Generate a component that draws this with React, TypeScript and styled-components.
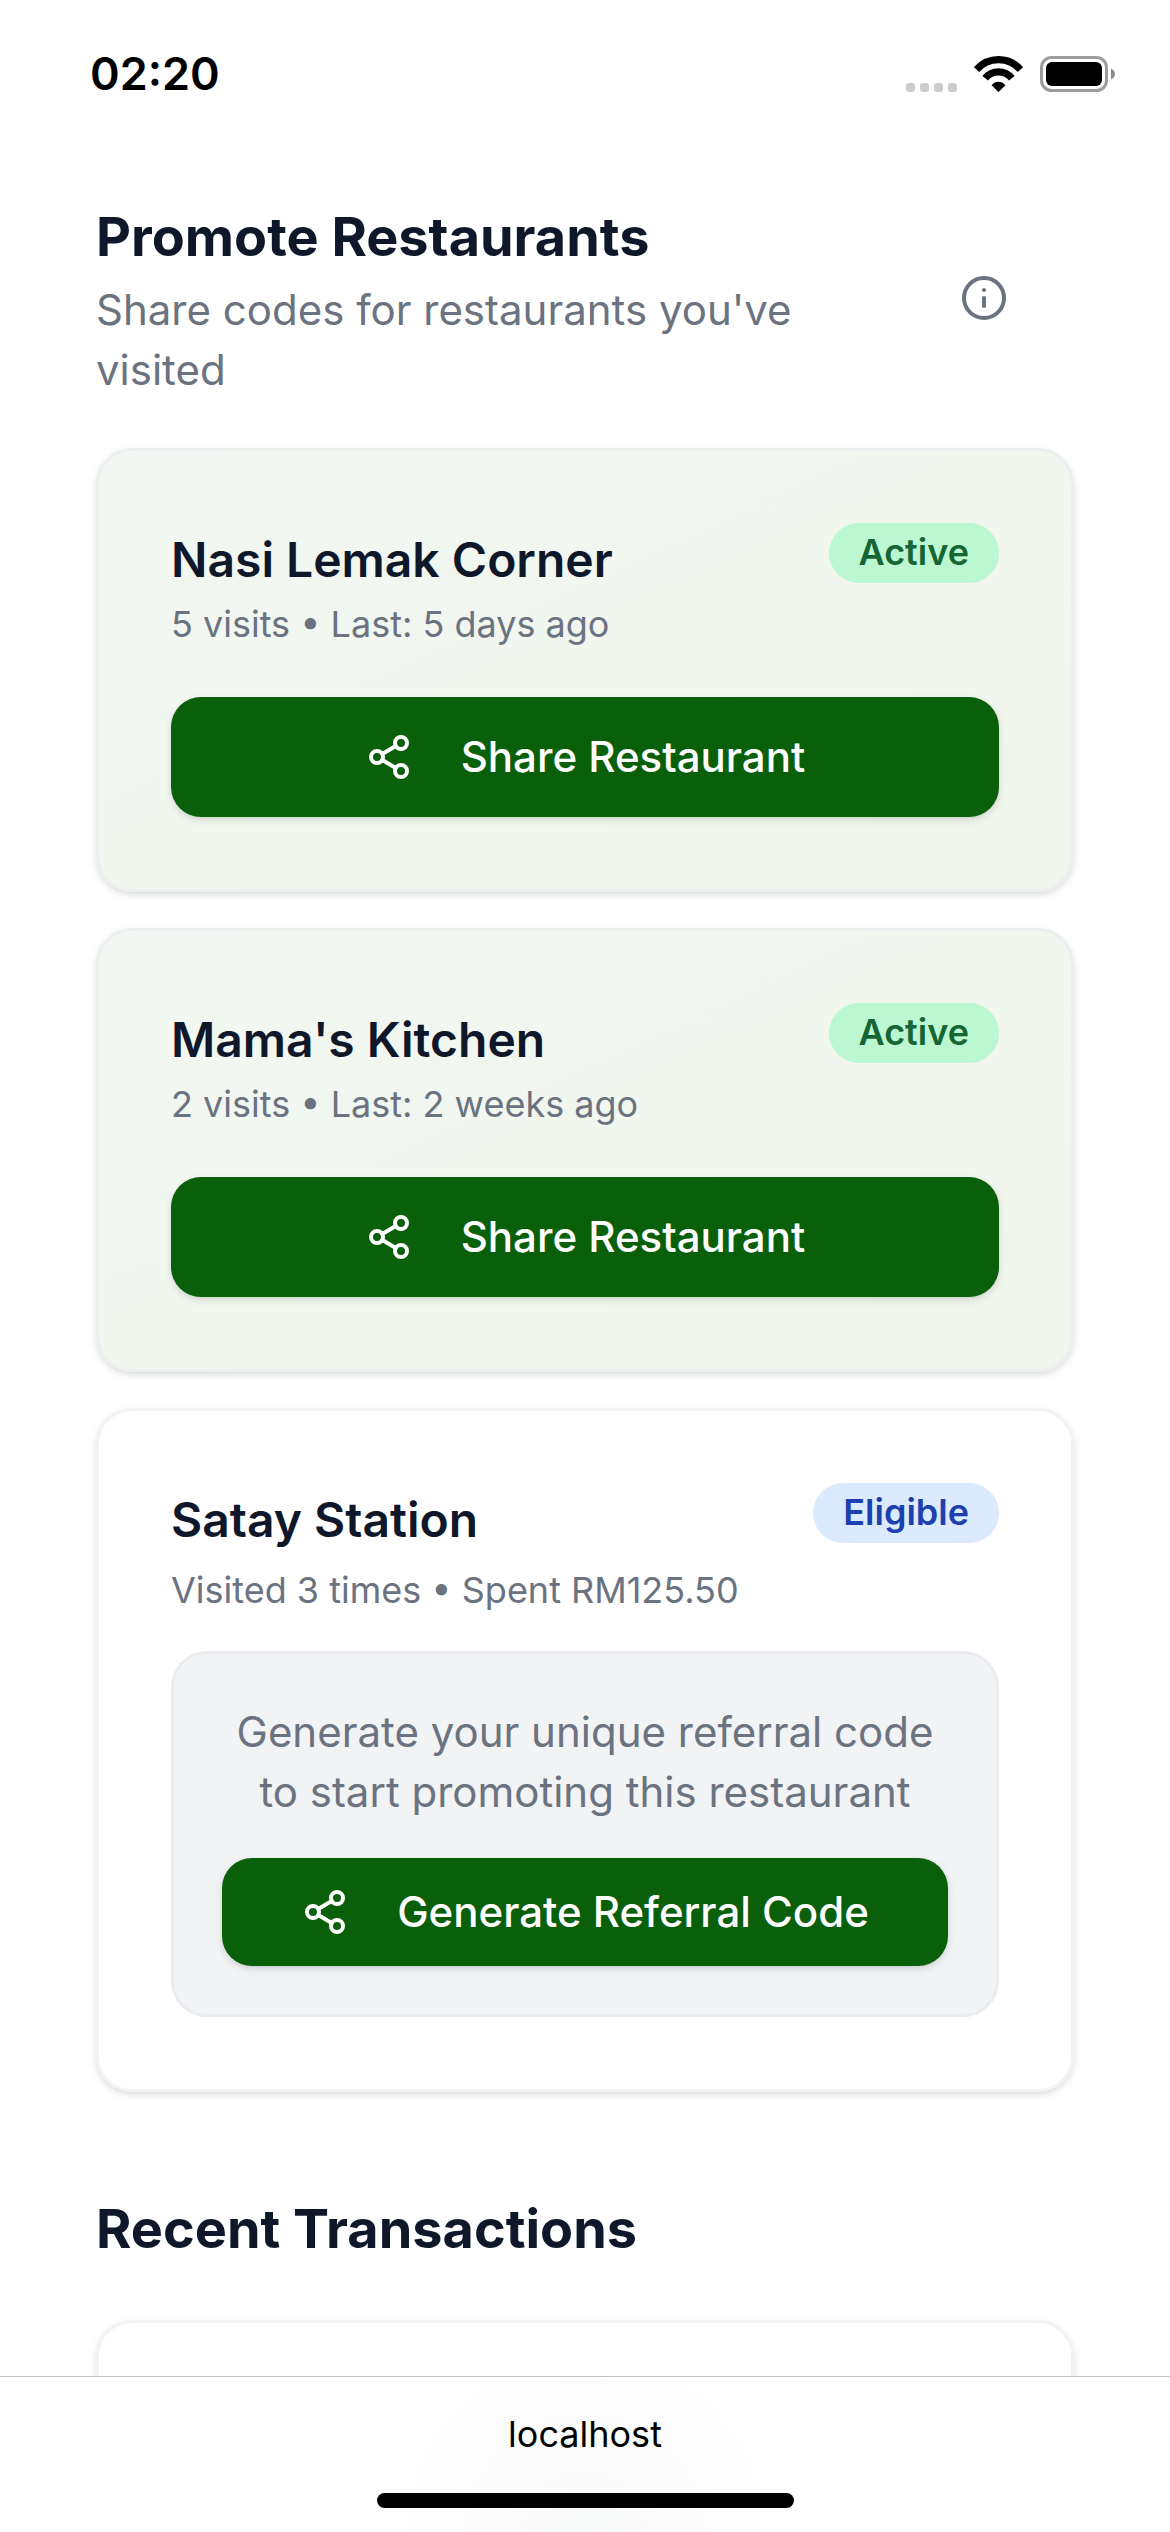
import React from 'react';
import styled, { createGlobalStyle } from 'styled-components';
import { Info, Share2 } from 'lucide-react';

const GlobalStyle = createGlobalStyle`
  *, *::before, *::after { box-sizing: border-box; }
  body { margin: 0; background: #ffffff; }
  h1, h2, h3, p { margin: 0; }
  button { font: inherit; border: 0; cursor: pointer; }
`;

const Screen = styled.div`
  display: flex;
  flex-direction: column;
  height: 100vh;
  overflow: hidden;
  background: #ffffff;
  color: #0f172a;
  font-family: Inter, "Liberation Sans", sans-serif;
`;

const StatusBar = styled.header`
  display: flex;
  flex-shrink: 0;
  align-items: center;
  justify-content: space-between;
  height: 148px;
  padding: 0 54px 0 90px;
  color: #000000;
`;

const Clock = styled.time`
  font-size: 45px;
  font-weight: 600;
  line-height: 60px;
`;

const StatusIcons = styled.div`
  display: flex;
  align-items: flex-end;
  gap: 17px;
`;

const Content = styled.main`
  display: flex;
  flex: 1;
  flex-direction: column;
  gap: 96px;
  min-height: 0;
  padding: 48px 96px;
  overflow-y: auto;
  scrollbar-width: none;
`;

const Section = styled.section`
  display: flex;
  flex-direction: column;
  gap: 48px;
`;

const SectionHeader = styled.div`
  display: flex;
  align-items: center;
  justify-content: space-between;
`;

const SectionTitle = styled.h2`
  padding-bottom: 3px;
  font-size: 54px;
  font-weight: 700;
  line-height: 81px;
`;

const SectionText = styled.p`
  color: #6b7280;
  font-size: 42px;
  line-height: 60px;
`;

const IconButton = styled.button`
  display: flex;
  flex-shrink: 0;
  align-items: center;
  justify-content: center;
  width: 180px;
  height: 108px;
  padding: 0;
  background: transparent;
  color: #6b7280;
`;

const CardList = styled.div`
  display: flex;
  flex-direction: column;
  gap: 36px;
`;

const Card = styled.article<{ $tinted?: boolean }>`
  flex-shrink: 0;
  min-height: 444px;
  padding: 72px;
  border: 3px solid ${(p) => (p.$tinted ? '#ebefee' : '#f2f3f5')};
  border-radius: 36px;
  background: ${(p) =>
    p.$tinted ? 'linear-gradient(to bottom right, #f2f7f3, #f0f6eb)' : '#ffffff'};
  box-shadow: 0 3px 9px rgba(0, 0, 0, 0.1), 0 3px 6px -3px rgba(0, 0, 0, 0.1);
`;

const CardTop = styled.div`
  display: flex;
  align-items: flex-start;
  justify-content: space-between;
`;

const CardTitle = styled.h3`
  font-size: 48px;
  font-weight: 600;
  line-height: 74px;
`;

const CardMeta = styled.p<{ $spacious?: boolean }>`
  margin: ${(p) => (p.$spacious ? '9px 0 37px' : '3px 0 49px')};
  color: #6b7280;
  font-size: 36px;
  line-height: 48px;
`;

const Badge = styled.span<{ $tone: 'green' | 'blue' }>`
  padding: 5px 30px 7px;
  border-radius: 30px;
  background: ${(p) => (p.$tone === 'green' ? '#bbf7d0' : '#dbeafe')};
  color: ${(p) => (p.$tone === 'green' ? '#166534' : '#1e40af')};
  font-size: 36px;
  font-weight: 600;
  line-height: 48px;
`;

const PrimaryButton = styled.button<{ $compact?: boolean }>`
  display: flex;
  align-items: center;
  justify-content: center;
  gap: 48px;
  width: 100%;
  height: ${(p) => (p.$compact ? 108 : 120)}px;
  padding: 0 36px;
  border-radius: 30px;
  background: #0a5f0a;
  color: #ffffff;
  font-size: 42px;
  font-weight: 500;
  line-height: 60px;
  box-shadow: 0 3px 9px rgba(0, 0, 0, 0.1), 0 3px 6px -3px rgba(0, 0, 0, 0.1);
`;

const ReferralPanel = styled.div`
  display: flex;
  flex-direction: column;
  gap: 36px;
  padding: 48px;
  border: 3px solid #ebecf0;
  border-radius: 36px;
  background: #f1f3f5;
  text-align: center;
`;

const BrowserBar = styled.footer`
  display: flex;
  flex-shrink: 0;
  flex-direction: column;
  align-items: center;
  justify-content: space-between;
  height: 156px;
  padding: 33px 0 24px;
  border-top: 1px solid #c2c2c4;
  background: radial-gradient(circle 180px at 50% 100%, #f8f9f9, #fefefe);
  color: #000000;
`;

const Address = styled.span`
  font-size: 36px;
  line-height: 48px;
`;

const HomeIndicator = styled.div`
  width: 417px;
  height: 15px;
  border-radius: 8px;
  background: #000000;
`;

const SignalIcon = () => (
  <svg width="51" height="36" viewBox="0 0 51 36" fill="#cccccc" aria-hidden="true">
    {[0, 14, 28, 42].map((x) => (
      <rect key={x} x={x} y="27" width="9" height="9" rx="3" />
    ))}
  </svg>
);

const WifiIcon = () => (
  <svg width="49" height="36" viewBox="0 0 49 36" aria-hidden="true">
    <path d="M24.5 36L17.600 29.200C21 24.600 28 24.600 31.400 29.200Z" />
    <path
      d="M2.600 13.500A29.200 29.200 0 0 1 46.400 13.500M11.200 22.200A17 17 0 0 1 37.800 22.200"
      fill="none"
      stroke="#000000"
      strokeWidth="7.200"
    />
  </svg>
);

const BatteryIcon = () => (
  <svg width="76" height="36" viewBox="0 0 76 36" aria-hidden="true">
    <rect x="1.500" y="1.500" width="65" height="33" rx="10" fill="none" stroke="#9c9c9c" strokeWidth="3" />
    <rect x="6" y="6" width="56" height="24" rx="6" />
    <path d="M71 12.500c2.500 1 4 3 4 5.500s-1.500 4.500-4 5.500z" fill="#8c8c8c" />
  </svg>
);

type Restaurant = { name: string; meta: string };

const promoted: Restaurant[] = [
  { name: 'Nasi Lemak Corner', meta: '5 visits • Last: 5 days ago' },
  { name: "Mama's Kitchen", meta: '2 visits • Last: 2 weeks ago' },
];

const PromotedCard = ({ name, meta }: Restaurant) => (
  <Card $tinted>
    <CardTop>
      <CardTitle>{name}</CardTitle>
      <Badge $tone="green">Active</Badge>
    </CardTop>
    <CardMeta>{meta}</CardMeta>
    <PrimaryButton type="button">
      <Share2 size={48} aria-hidden="true" />
      Share Restaurant
    </PrimaryButton>
  </Card>
);

const EligibleCard = ({ name, meta }: Restaurant) => (
  <Card>
    <CardTop>
      <CardTitle>{name}</CardTitle>
      <Badge $tone="blue">Eligible</Badge>
    </CardTop>
    <CardMeta $spacious>{meta}</CardMeta>
    <ReferralPanel>
      <SectionText>Generate your unique referral code to start promoting this restaurant</SectionText>
      <PrimaryButton type="button" $compact>
        <Share2 size={48} aria-hidden="true" />
        Generate Referral Code
      </PrimaryButton>
    </ReferralPanel>
  </Card>
);

export default function App() {
  return (
    <Screen>
      <GlobalStyle />
      <StatusBar>
        <Clock>02:20</Clock>
        <StatusIcons>
          <SignalIcon />
          <WifiIcon />
          <BatteryIcon />
        </StatusIcons>
      </StatusBar>
      <Content>
        <Section>
          <SectionHeader>
            <div>
              <SectionTitle>Promote Restaurants</SectionTitle>
              <SectionText>Share codes for restaurants you've visited</SectionText>
            </div>
            <IconButton type="button" aria-label="About promotions">
              <Info size={48} aria-hidden="true" />
            </IconButton>
          </SectionHeader>
          <CardList>
            {promoted.map((r) => (
              <PromotedCard key={r.name} {...r} />
            ))}
            <EligibleCard name="Satay Station" meta="Visited 3 times • Spent RM125.50" />
          </CardList>
        </Section>
        <Section>
          <SectionTitle>Recent Transactions</SectionTitle>
          <Card />
        </Section>
      </Content>
      <BrowserBar>
        <Address>localhost</Address>
        <HomeIndicator />
      </BrowserBar>
    </Screen>
  );
}
